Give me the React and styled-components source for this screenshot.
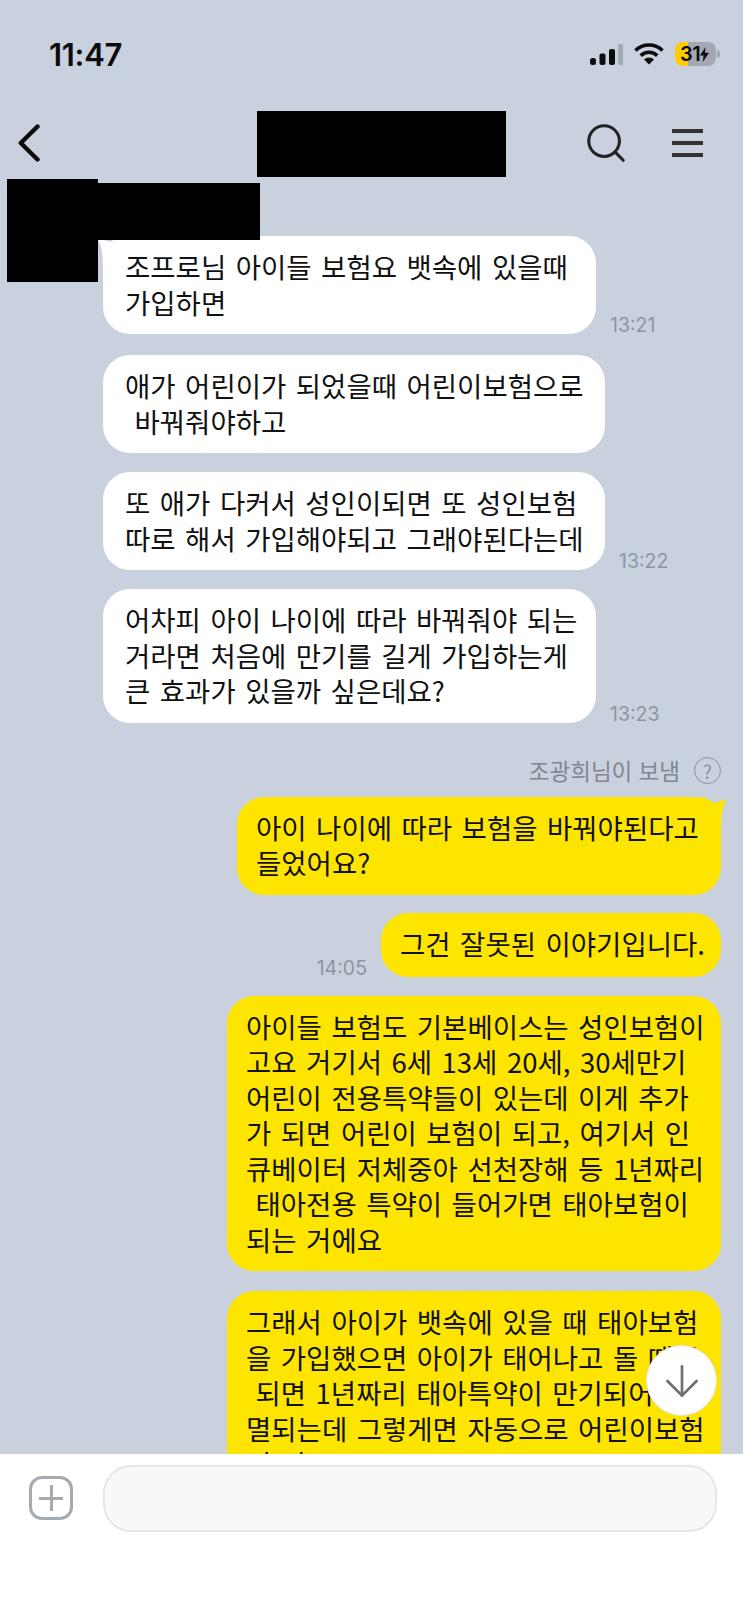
import React from 'react';
import styled, { createGlobalStyle } from 'styled-components';
import { ArrowDown, Search } from 'lucide-react';

const GlobalStyle = createGlobalStyle`
    html, body {
        margin: 0;
        padding: 0;
        background: #c9d1df;
    }
    * {
        box-sizing: border-box;
    }
`;

const Page = styled.div`
    position: relative;
    width: 743px;
    height: 1609px;
    overflow: hidden;
    display: flex;
    flex-direction: column;
    background: #c9d1df;
    color: #111;
    font-family: "Noto Sans CJK KR", "Noto Sans", sans-serif;
`;

const StatusBar = styled.div`
    flex: none;
    height: 108px;
    display: flex;
    align-items: center;
    justify-content: space-between;
    padding: 0 27px 0 49px;
`;

const Clock = styled.div`
    font-family: Inter, sans-serif;
    font-size: 31px;
    font-weight: 600;
    letter-spacing: -0.3px;
    color: #0c0c0c;
`;

const StatusIcons = styled.div`
    display: flex;
    align-items: center;
    gap: 11px;
`;

const Battery = styled.div`
    position: relative;
    width: 41px;
    height: 24px;
    border-radius: 8px;
    display: flex;
    align-items: center;
    justify-content: center;
    gap: 0;
    padding-right: 2px;
    background: linear-gradient(to right, #ffcc00 0 13px, #a3a9b2 13px);
    font-family: Inter, sans-serif;
    font-size: 20px;
    font-weight: 600;
    letter-spacing: -0.5px;
    color: #0c0c0c;

    &::after {
        content: '';
        position: absolute;
        right: -4px;
        top: 8px;
        width: 3px;
        height: 8px;
        border-radius: 0 3px 3px 0;
        background: #a3a9b2;
    }
`;

const Header = styled.div`
    flex: none;
    height: 70px;
    display: flex;
    align-items: center;
    padding: 0 40px 0 18px;
`;

const BackIcon = styled.svg`
    flex: none;
    margin-top: -1px;
`;

const TitleRedaction = styled.div`
    flex: none;
    width: 249px;
    height: 66px;
    margin: 2px 0 0 217px;
    background: #000;
`;

const HeaderActions = styled.div`
    margin-left: auto;
    display: flex;
    align-items: center;
    gap: 43px;
`;

const SearchIcon = styled(Search)`
    color: #222;
`;

const Hamburger = styled.div`
    width: 31px;
    height: 28px;
    display: flex;
    flex-direction: column;
    justify-content: space-between;

    span {
        height: 4px;
        background: #333;
    }
`;

const Redaction = styled.div`
    position: absolute;
    left: ${p => p.$left}px;
    top: ${p => p.$top}px;
    width: ${p => p.$width}px;
    height: ${p => p.$height}px;
    background: #000;
    z-index: 2;
`;

const Messages = styled.div`
    flex: 1;
    min-height: 0;
    overflow: hidden;
    padding: 58px 22px 0 103px;
    display: flex;
    flex-direction: column;
`;

const Row = styled.div`
    flex: none;
    display: flex;
    align-items: flex-end;
    gap: 14px;
    justify-content: ${p => (p.$mine ? 'flex-end' : 'flex-start')};
    margin-top: ${p => p.$gap}px;
`;

const Bubble = styled.div`
    position: relative;
    flex: none;
    width: ${p => p.$width}px;
    min-height: 64px;
    padding: 13px 0 14px ${p => (p.$mine ? '19px' : '22px')};
    border-radius: 27px;
    background: ${p => (p.$mine ? '#fee500' : '#fff')};
    font-size: 27.5px;
    line-height: 35.5px;
    word-spacing: 1.8px;
    white-space: pre;
`;

const Tail = styled.svg`
    position: absolute;
    top: 0;
    width: 27px;
    height: 33px;
    ${p => (p.$mine ? 'right: -6px;' : 'left: -6px; transform: scaleX(-1);')}
`;

const Time = styled.div`
    flex: none;
    font-family: Inter, sans-serif;
    font-size: 19.5px;
    line-height: 20px;
    color: #8f959e;
    margin-bottom: -1px;
`;

const SenderRow = styled.div`
    flex: none;
    margin-top: 34px;
    height: 27px;
    display: flex;
    align-items: center;
    justify-content: flex-end;
    gap: 14px;
    font-size: 22.5px;
    color: #7f868f;
`;

const HelpIcon = styled.div`
    width: 27px;
    height: 27px;
    border-radius: 50%;
    border: 1.5px solid #8a9099;
    display: flex;
    align-items: center;
    justify-content: center;
    font-size: 19px;
    color: #8a9099;
`;

const ScrollButton = styled.div`
    position: absolute;
    left: 646px;
    top: 1345px;
    width: 71px;
    height: 71px;
    border-radius: 50%;
    background: #fff;
    border: 1px solid #e2e2e2;
    display: flex;
    align-items: center;
    justify-content: center;
    color: #6f6f6f;
`;

const Composer = styled.div`
    position: relative;
    flex: none;
    height: 155px;
    background: #fff;
    display: flex;
    align-items: flex-start;
    padding: 11px 26px 0 29px;
    gap: 30px;
`;

const PlusButton = styled.div`
    flex: none;
    position: relative;
    width: 44px;
    height: 44px;
    margin-top: 11px;
    border-radius: 13px;
    border: 3px solid #a5abb3;

    &::before, &::after {
        content: '';
        position: absolute;
        background: #a5abb3;
    }
    &::before {
        left: 7px;
        right: 7px;
        top: 18px;
        height: 2.5px;
    }
    &::after {
        top: 6px;
        bottom: 6px;
        left: 18px;
        width: 2.5px;
    }
`;

const InputBox = styled.div`
    flex: 1;
    height: 67px;
    border-radius: 28px;
    background: #f8f8f8;
    border: 2px solid #e6e6e6;
`;

const Wifi = () => (
    <svg width="30" height="22" viewBox="0 0 30 22">
        <path d="M1.5 7.5 A19.5 19.5 0 0 1 28.5 7.5" fill="none" stroke="#0c0c0c" strokeWidth="3.6" />
        <path d="M6.7 12.6 A12 12 0 0 1 23.3 12.6" fill="none" stroke="#0c0c0c" strokeWidth="3.6" />
        <path d="M10 16.6 A7 7 0 0 1 20 16.6 L15 21.6 Z" fill="#0c0c0c" />
    </svg>
);

const Signal = () => (
    <svg width="33" height="21" viewBox="0 0 33 21">
        <rect x="0" y="14" width="6" height="7" rx="2.5" fill="#0c0c0c" />
        <rect x="9.5" y="9.5" width="6" height="11.5" rx="2" fill="#0c0c0c" />
        <rect x="19" y="5" width="6" height="16" rx="2" fill="#0c0c0c" />
        <rect x="28" y="0" width="5.5" height="21" rx="2" fill="#a3a9b2" />
    </svg>
);

const Bolt = () => (
    <svg width="9" height="15" viewBox="0 0 9 15">
        <path d="M5.5 0 L0 8.5 H3.6 L2.8 15 L9 5.8 H5 Z" fill="#0c0c0c" />
    </svg>
);

const BubbleTail = ({ mine, color }) => (
    <Tail $mine={mine} viewBox="0 0 27 33">
        <path d="M0 0 Q8 1 13 6 Q20 4.5 27 2 Q21 10 21 33 H0 Z" fill={color} />
    </Tail>
);

const messages = [
    { width: 493, gap: 0, tail: true, time: '13:21', text: '조프로님 아이들 보험요 뱃속에 있을때\n가입하면' },
    { width: 502, gap: 21, text: '애가 어린이가 되었을때 어린이보험으로\n 바꿔줘야하고' },
    { width: 502, gap: 19, time: '13:22', text: '또 애가 다커서 성인이되면 또 성인보험\n따로 해서 가입해야되고 그래야된다는데' },
    { width: 493, gap: 19, time: '13:23', text: '어차피 아이 나이에 따라 바꿔줘야 되는\n거라면 처음에 만기를 길게 가입하는게\n큰 효과가 있을까 싶은데요?' },
];

const myMessages = [
    { width: 484, gap: 13, tail: true, text: '아이 나이에 따라 보험을 바꿔야된다고\n들었어요?' },
    { width: 340, gap: 18, time: '14:05', text: '그건 잘못된 이야기입니다.' },
    { width: 494, gap: 19, text: '아이들 보험도 기본베이스는 성인보험이\n고요 거기서 6세 13세 20세, 30세만기\n어린이 전용특약들이 있는데 이게 추가\n가 되면 어린이 보험이 되고, 여기서 인\n큐베이터 저체중아 선천장해 등 1년짜리\n 태아전용 특약이 들어가면 태아보험이\n되는 거에요' },
    { width: 494, gap: 20, text: '그래서 아이가 뱃속에 있을 때 태아보험\n을 가입했으면 아이가 태어나고 돌 때쯤\n 되면 1년짜리 태아특약이 만기되어 소\n멸되는데 그렇게면 자동으로 어린이보험\n이 되고' },
];

const App = () => {
    return (
        <Page lang="ko">
            <GlobalStyle />

            <StatusBar>
                <Clock>11:47</Clock>
                <StatusIcons>
                    <Signal />
                    <Wifi />
                    <Battery>31<Bolt /></Battery>
                </StatusIcons>
            </StatusBar>

            <Header>
                <BackIcon width="22" height="38" viewBox="0 0 22 38">
                    <path d="M19.5 2.5 L2.8 19 L19.5 35.5" fill="none" stroke="#0c0c0c" strokeWidth="4.4" strokeLinecap="round" strokeLinejoin="round" />
                </BackIcon>
                <TitleRedaction />
                <HeaderActions>
                    <SearchIcon size={46} strokeWidth={1.6} />
                    <Hamburger><span /><span /><span /></Hamburger>
                </HeaderActions>
            </Header>

            <Redaction $left={7} $top={179} $width={91} $height={103} />
            <Redaction $left={98} $top={183} $width={162} $height={57} />

            <Messages>
                {messages.map(m => (
                    <Row key={m.text} $gap={m.gap}>
                        <Bubble $width={m.width}>
                            {m.tail && <BubbleTail color="#fff" />}
                            {m.text}
                        </Bubble>
                        {m.time && <Time>{m.time}</Time>}
                    </Row>
                ))}

                <SenderRow>
                    조광희님이 보냄
                    <HelpIcon>?</HelpIcon>
                </SenderRow>

                {myMessages.map(m => (
                    <Row key={m.text} $mine $gap={m.gap}>
                        {m.time && <Time>{m.time}</Time>}
                        <Bubble $mine $width={m.width}>
                            {m.tail && <BubbleTail mine color="#fee500" />}
                            {m.text}
                        </Bubble>
                    </Row>
                ))}
            </Messages>

            <ScrollButton>
                <ArrowDown size={50} strokeWidth={1.3} />
            </ScrollButton>

            <Composer>
                <PlusButton />
                <InputBox />
            </Composer>
        </Page>
    );
};

export default App;
